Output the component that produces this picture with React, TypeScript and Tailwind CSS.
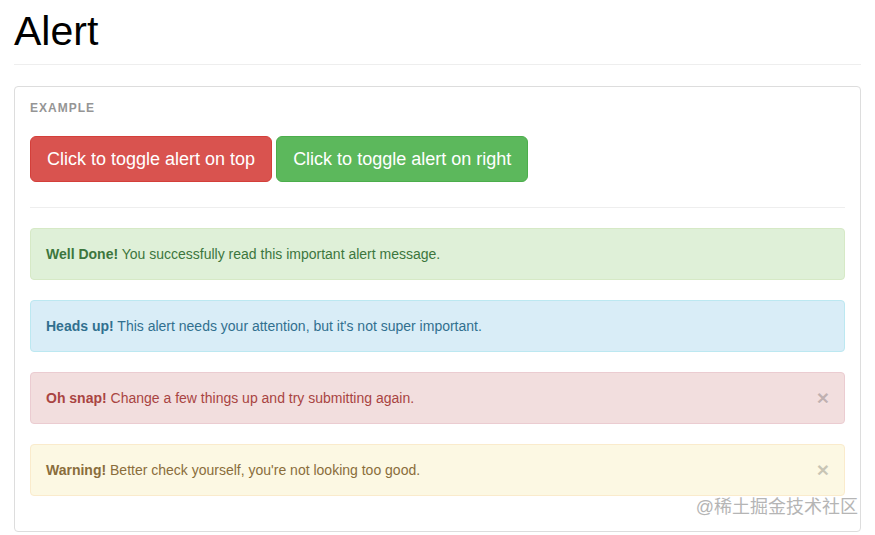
import React from "react";

type AlertProps = {
  title: string;
  msg: string;
  dismiss?: boolean;
  cls: string;
};

function Alert({ title, msg, dismiss, cls }: AlertProps) {
  return (
    <div className={`flex items-center h-[52px] rounded-[4px] border pl-[15px] pr-[15px] mb-[20px] text-[14px] leading-5 ${cls}`}>
      <div className="flex-1">
        <strong className="font-bold">{title}</strong> {msg}
      </div>
      {dismiss && (
        <span className="text-[21px] font-bold leading-none text-black opacity-20 [text-shadow:0_1px_0_#fff] -mt-[2px]">
          ×
        </span>
      )}
    </div>
  );
}

export default function App() {
  return (
    <div
      className="relative w-[875px] h-[535px] bg-white px-[14px] overflow-hidden"
      style={{ fontFamily: '"Liberation Sans", Arial, sans-serif' }}
    >
      <h1 className="pt-[8px] text-[41px] leading-[46px] text-black font-normal">Alert</h1>
      <div className="mt-[10px] h-px bg-[#eee] w-[847px]" />
      <div className="mt-[21px] w-[847px] h-[446px] border border-[#ddd] rounded-[4px] px-[15px] pt-[13px]">
        <div className="text-[12px] leading-4 font-bold tracking-[1px] text-[#959595]">EXAMPLE</div>
        <div className="mt-[20px] flex gap-[4px]">
          <button className="h-[46px] px-4 text-[18px] leading-6 text-white bg-[#d9534f] border border-[#d43f3a] rounded-[6px]">
            Click to toggle alert on top
          </button>
          <button className="h-[46px] px-4 text-[18px] leading-6 text-white bg-[#5cb85c] border border-[#4cae4c] rounded-[6px]">
            Click to toggle alert on right
          </button>
        </div>
        <div className="mt-[25px] h-px bg-[#eee]" />
        <div className="mt-[20px]">
          <Alert
            cls="bg-[#dff0d8] border-[#d6e9c6] text-[#3c763d]"
            title="Well Done!"
            msg="You successfully read this important alert message."
          />
          <Alert
            cls="bg-[#d9edf7] border-[#bce8f1] text-[#31708f]"
            title="Heads up!"
            msg="This alert needs your attention, but it's not super important."
          />
          <Alert
            cls="bg-[#f2dede] border-[#ebccd1] text-[#a94442]"
            title="Oh snap!"
            msg="Change a few things up and try submitting again."
            dismiss
          />
          <Alert
            cls="bg-[#fcf8e3] border-[#faebcc] text-[#8a6d3b]"
            title="Warning!"
            msg="Better check yourself, you're not looking too good."
            dismiss
          />
        </div>
      </div>
      <div
        className="absolute right-[17px] top-[496px] text-[18px] leading-[22px] text-[#b5b5b5] [text-shadow:0_0_2px_#fff]"
        style={{ fontFamily: '"Liberation Sans", "Noto Sans CJK SC", sans-serif' }}
      >
        @稀土掘金技术社区
      </div>
    </div>
  );
}
